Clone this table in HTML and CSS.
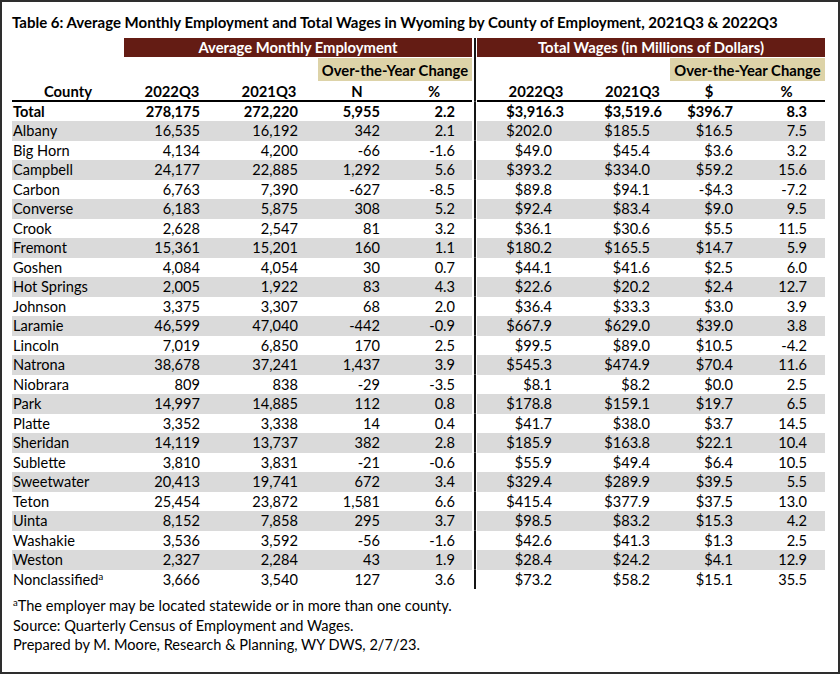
FILE: index.html
```html
<!DOCTYPE html>
<html lang="en">
<head>
<meta charset="utf-8">
<title>Table 6</title>
<link rel="stylesheet" href="styles.css">
</head>
<body>
<div class="sheet">
  <h1 class="title">Table 6: Average Monthly Employment and Total Wages in Wyoming by County of Employment, 2021Q3 &amp; 2022Q3</h1>
  <table class="data">
    <colgroup>
      <col class="c-county"><col class="c-e1"><col class="c-e2"><col class="c-e3"><col class="c-e4">
      <col class="c-sep">
      <col class="c-w1"><col class="c-w2"><col class="c-w3"><col class="c-w4">
    </colgroup>
    <thead>
      <tr class="band">
        <th class="blank"></th>
        <th class="maroon" colspan="4">Average Monthly Employment</th>
        <td class="sep"></td>
        <th class="maroon" colspan="4">Total Wages (in Millions of Dollars)</th>
      </tr>
      <tr class="sub">
        <th class="blank" colspan="3"></th>
        <th class="tan" colspan="2">Over-the-Year Change</th>
        <td class="sep"></td>
        <th class="blank" colspan="2"></th>
        <th class="tan" colspan="2">Over-the-Year Change</th>
      </tr>
      <tr class="heads">
        <th>County</th><th>2022Q3</th><th>2021Q3</th><th>N</th><th>%</th>
        <td class="sep"></td>
        <th>2022Q3</th><th>2021Q3</th><th>$</th><th>%</th>
      </tr>
    </thead>
    <tbody>
      <tr class="total"><td>Total</td><td>278,175</td><td>272,220</td><td>5,955</td><td>2.2</td><td class="sep"></td><td>$3,916.3</td><td>$3,519.6</td><td>$396.7</td><td>8.3</td></tr>
      <tr class="alt"><td>Albany</td><td>16,535</td><td>16,192</td><td>342</td><td>2.1</td><td class="sep"></td><td>$202.0</td><td>$185.5</td><td>$16.5</td><td>7.5</td></tr>
      <tr><td>Big Horn</td><td>4,134</td><td>4,200</td><td>-66</td><td>-1.6</td><td class="sep"></td><td>$49.0</td><td>$45.4</td><td>$3.6</td><td>3.2</td></tr>
      <tr class="alt"><td>Campbell</td><td>24,177</td><td>22,885</td><td>1,292</td><td>5.6</td><td class="sep"></td><td>$393.2</td><td>$334.0</td><td>$59.2</td><td>15.6</td></tr>
      <tr><td>Carbon</td><td>6,763</td><td>7,390</td><td>-627</td><td>-8.5</td><td class="sep"></td><td>$89.8</td><td>$94.1</td><td>-$4.3</td><td>-7.2</td></tr>
      <tr class="alt"><td>Converse</td><td>6,183</td><td>5,875</td><td>308</td><td>5.2</td><td class="sep"></td><td>$92.4</td><td>$83.4</td><td>$9.0</td><td>9.5</td></tr>
      <tr><td>Crook</td><td>2,628</td><td>2,547</td><td>81</td><td>3.2</td><td class="sep"></td><td>$36.1</td><td>$30.6</td><td>$5.5</td><td>11.5</td></tr>
      <tr class="alt"><td>Fremont</td><td>15,361</td><td>15,201</td><td>160</td><td>1.1</td><td class="sep"></td><td>$180.2</td><td>$165.5</td><td>$14.7</td><td>5.9</td></tr>
      <tr><td>Goshen</td><td>4,084</td><td>4,054</td><td>30</td><td>0.7</td><td class="sep"></td><td>$44.1</td><td>$41.6</td><td>$2.5</td><td>6.0</td></tr>
      <tr class="alt"><td>Hot Springs</td><td>2,005</td><td>1,922</td><td>83</td><td>4.3</td><td class="sep"></td><td>$22.6</td><td>$20.2</td><td>$2.4</td><td>12.7</td></tr>
      <tr><td>Johnson</td><td>3,375</td><td>3,307</td><td>68</td><td>2.0</td><td class="sep"></td><td>$36.4</td><td>$33.3</td><td>$3.0</td><td>3.9</td></tr>
      <tr class="alt"><td>Laramie</td><td>46,599</td><td>47,040</td><td>-442</td><td>-0.9</td><td class="sep"></td><td>$667.9</td><td>$629.0</td><td>$39.0</td><td>3.8</td></tr>
      <tr><td>Lincoln</td><td>7,019</td><td>6,850</td><td>170</td><td>2.5</td><td class="sep"></td><td>$99.5</td><td>$89.0</td><td>$10.5</td><td>-4.2</td></tr>
      <tr class="alt"><td>Natrona</td><td>38,678</td><td>37,241</td><td>1,437</td><td>3.9</td><td class="sep"></td><td>$545.3</td><td>$474.9</td><td>$70.4</td><td>11.6</td></tr>
      <tr><td>Niobrara</td><td>809</td><td>838</td><td>-29</td><td>-3.5</td><td class="sep"></td><td>$8.1</td><td>$8.2</td><td>$0.0</td><td>2.5</td></tr>
      <tr class="alt"><td>Park</td><td>14,997</td><td>14,885</td><td>112</td><td>0.8</td><td class="sep"></td><td>$178.8</td><td>$159.1</td><td>$19.7</td><td>6.5</td></tr>
      <tr><td>Platte</td><td>3,352</td><td>3,338</td><td>14</td><td>0.4</td><td class="sep"></td><td>$41.7</td><td>$38.0</td><td>$3.7</td><td>14.5</td></tr>
      <tr class="alt"><td>Sheridan</td><td>14,119</td><td>13,737</td><td>382</td><td>2.8</td><td class="sep"></td><td>$185.9</td><td>$163.8</td><td>$22.1</td><td>10.4</td></tr>
      <tr><td>Sublette</td><td>3,810</td><td>3,831</td><td>-21</td><td>-0.6</td><td class="sep"></td><td>$55.9</td><td>$49.4</td><td>$6.4</td><td>10.5</td></tr>
      <tr class="alt"><td>Sweetwater</td><td>20,413</td><td>19,741</td><td>672</td><td>3.4</td><td class="sep"></td><td>$329.4</td><td>$289.9</td><td>$39.5</td><td>5.5</td></tr>
      <tr><td>Teton</td><td>25,454</td><td>23,872</td><td>1,581</td><td>6.6</td><td class="sep"></td><td>$415.4</td><td>$377.9</td><td>$37.5</td><td>13.0</td></tr>
      <tr class="alt"><td>Uinta</td><td>8,152</td><td>7,858</td><td>295</td><td>3.7</td><td class="sep"></td><td>$98.5</td><td>$83.2</td><td>$15.3</td><td>4.2</td></tr>
      <tr><td>Washakie</td><td>3,536</td><td>3,592</td><td>-56</td><td>-1.6</td><td class="sep"></td><td>$42.6</td><td>$41.3</td><td>$1.3</td><td>2.5</td></tr>
      <tr class="alt"><td>Weston</td><td>2,327</td><td>2,284</td><td>43</td><td>1.9</td><td class="sep"></td><td>$28.4</td><td>$24.2</td><td>$4.1</td><td>12.9</td></tr>
      <tr><td>Nonclassified<sup>a</sup></td><td>3,666</td><td>3,540</td><td>127</td><td>3.6</td><td class="sep"></td><td>$73.2</td><td>$58.2</td><td>$15.1</td><td>35.5</td></tr>
    </tbody>
  </table>
  <div class="notes">
    <p><sup>a</sup>The employer may be located statewide or in more than one county.</p>
    <p>Source: Quarterly Census of Employment and Wages.</p>
    <p>Prepared by M. Moore, Research &amp; Planning, WY DWS, 2/7/23.</p>
  </div>
</div>
</body>
</html>
```

FILE: styles.css
```css
html, body {
  margin: 0;
  padding: 0;
  background: #fff;
}

.sheet {
  width: 840px;
  height: 674px;
  box-sizing: border-box;
  border: 2px solid #2e2e2e;
  padding: 10px 0 0 10px;
  font-family: Lato, "Open Sans", sans-serif;
  color: #000;
}

.title {
  margin: 0 0 6px 0;
  font-size: 15px;
  font-weight: 700;
  line-height: 20px;
  height: 20px;
  white-space: nowrap;
}

.data {
  border-collapse: separate;
  border-spacing: 0;
  table-layout: fixed;
  width: 813px;
  font-size: 14.6px;
}

.c-county { width: 112px; }
.c-e1 { width: 96px; }
.c-e2 { width: 98px; }
.c-e3 { width: 78px; }
.c-e4 { width: 76px; }
.c-sep { width: 5px; }
.c-w1 { width: 118px; }
.c-w2 { width: 75px; }
.c-w3 { width: 78px; }
.c-w4 { width: 77px; }

.data th,
.data td {
  padding: 0;
  white-space: nowrap;
}

.data th {
  font-weight: 700;
  font-size: 14.8px;
  text-align: center;
}

.data td.sep {
  padding: 0;
  background: linear-gradient(#151515, #151515) no-repeat center / 2px 100%;
}

.band {
  height: 19px;
}

.band th {
  line-height: 19px;
}

.maroon {
  background: #641c14;
  color: #fff;
}

.sub {
  height: 24px;
}

.sub th {
  line-height: 22px;
  vertical-align: bottom;
}

.tan {
  background: #ddd3a8;
  box-shadow: inset 0 1px 0 #fff;
}

.heads {
  height: 20.5px;
}

.heads th {
  line-height: 18px;
  vertical-align: bottom;
  border-bottom: 2px solid #000;
}

.data tbody tr {
  height: 19.5px;
}

.data tbody td {
  line-height: 19.5px;
  text-align: right;
}

.data tbody td:nth-child(1) {
  text-align: left;
  padding-left: 1px;
}
.data tbody td:nth-child(2) { padding-right: 20px; }
.data tbody td:nth-child(3) { padding-right: 20px; }
.data tbody td:nth-child(4) { padding-right: 16px; }
.data tbody td:nth-child(5) { padding-right: 17px; }
.data tbody td:nth-child(7) { padding-right: 43px; }
.data tbody td:nth-child(8) { padding-right: 20px; }
.data tbody td:nth-child(9) { padding-right: 15px; }
.data tbody td:nth-child(10) { padding-right: 18px; }

.data tbody tr.total td {
  font-weight: 700;
}
.data tbody tr.total td:nth-child(7) { padding-right: 31px; }
.data tbody tr.total td:nth-child(8) { padding-right: 8px; }

.data tbody tr.alt td {
  background: #dadada;
}
.data tbody tr.alt td.sep {
  background: linear-gradient(#151515, #151515) no-repeat center / 2px 100%;
}

sup {
  font-size: 9.5px;
  line-height: 0;
  vertical-align: 5px;
}

.notes {
  margin-top: 7px;
  font-size: 14.6px;
}

.notes p {
  margin: 0 0 0 1px;
  line-height: 19.5px;
}
```
